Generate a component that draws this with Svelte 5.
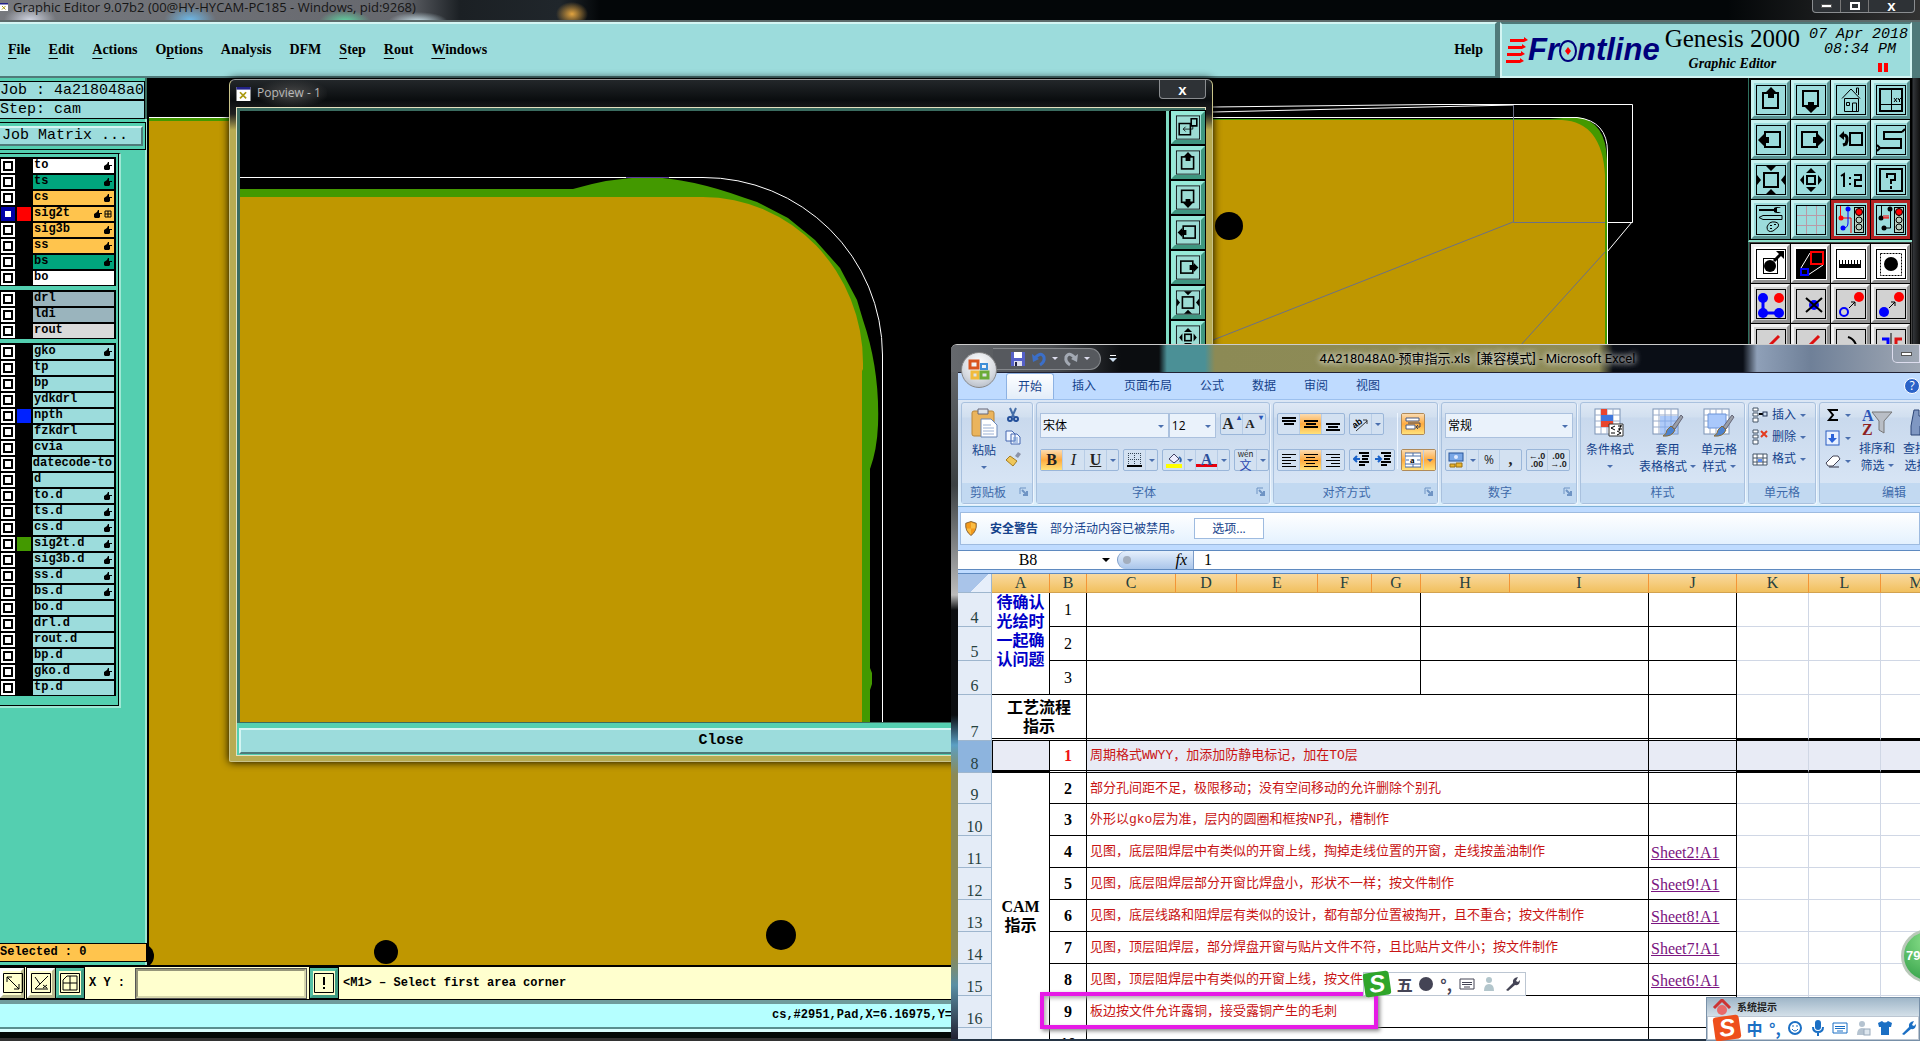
<script lang="ts">
  type Layer = { name: string; bg?: string; swatch?: string; hand?: boolean; grid?: boolean; active?: boolean };

  const menus = [
    ["", "F", "ile"],
    ["", "E", "dit"],
    ["", "A", "ctions"],
    ["O", "p", "tions"],
    ["Analysis", "", ""],
    ["DFM", "", ""],
    ["", "S", "tep"],
    ["", "R", "out"],
    ["", "W", "indows"],
  ];

  const layerGroups: Layer[][] = [
    [
      { name: "to", bg: "#fff", hand: true },
      { name: "ts", bg: "#00a57d", hand: true },
      { name: "cs", bg: "#ffc44d", hand: true },
      { name: "sig2t", bg: "#ffc44d", hand: true, grid: true, swatch: "#f00", active: true },
      { name: "sig3b", bg: "#ffc44d", hand: true },
      { name: "ss", bg: "#ffc44d", hand: true },
      { name: "bs", bg: "#00a57d", hand: true },
      { name: "bo", bg: "#fff" },
    ],
    [
      { name: "drl", bg: "#9ab4bd" },
      { name: "ldi", bg: "#9ab4bd" },
      { name: "rout", bg: "#dadada" },
    ],
    [
      { name: "gko", hand: true },
      { name: "tp" },
      { name: "bp" },
      { name: "ydkdrl" },
      { name: "npth", swatch: "#0022ff" },
      { name: "fzkdrl" },
      { name: "cvia" },
      { name: "datecode-to" },
      { name: "d" },
      { name: "to.d", hand: true },
      { name: "ts.d", hand: true },
      { name: "cs.d", hand: true },
      { name: "sig2t.d", hand: true, swatch: "#439900" },
      { name: "sig3b.d", hand: true },
      { name: "ss.d", hand: true },
      { name: "bs.d", hand: true },
      { name: "bo.d" },
      { name: "drl.d" },
      { name: "rout.d" },
      { name: "bp.d" },
      { name: "gko.d", hand: true },
      { name: "tp.d" },
    ],
  ];

  // all tool glyphs share a 30x30 box
  const frame = '<rect x=".5" y=".5" width="29" height="29" fill="none" stroke="#000"/>';
  const sq = (x: number, y: number, s: number) =>
    `<rect x="${x}" y="${y}" width="${s}" height="${s}" fill="none" stroke="#000" stroke-width="2"/>`;
  const up = '<path d="M15 2l6 6h-3v5h-6v-5h-3z"/>';
  const lights = (c: string) =>
    `<rect x="18.500" y="2.500" width="9" height="25" fill="#b9cfc0" stroke="#000"/><circle cx="23" cy="7" r="3.500" fill="${c}" stroke="#000"/><circle cx="23" cy="15" r="3" fill="none" stroke="#000"/><circle cx="23" cy="22" r="3" fill="none" stroke="#000"/>`;

  const icons: Record<string, string> = {
    up: frame + sq(7, 8, 15) + up,
    down: frame + sq(7, 6, 15) + '<path d="M15 28l6-6h-3v-5h-6v5h-3z"/>',
    left: frame + sq(9, 7, 15) + '<path d="M2 15l6-6v3h5v6h-5v3z"/>',
    right: frame + sq(6, 7, 15) + '<path d="M28 15l-6-6v3h-5v6h5v3z"/>',
    home: frame + '<path d="M6 13.500L15 4l9 9.500M8.500 13.500v13h14v-13zM16.500 27v-9h4v9M10.500 17.500h3v3h-3zM20.500 8V3h2v7" fill="none" stroke="#000"/>',
    xy: frame + '<path d="M4 4h22v22H4z" fill="none" stroke="#000" stroke-width="2"/><path d="M4 19.500h22M15.500 4v22" stroke="#000"/><path d="M18 13l3 4M21 13l-3 4M22 13l1 2 2-2M23.500 15v2" fill="none" stroke="#000"/>',
    back: frame + sq(14, 8, 12) + '<path d="M8 10q5 1 2 9l-3 1" fill="none" stroke="#000" stroke-width="3"/><path d="M3 11l5-5v9z"/>',
    snake: frame + '<path d="M26 7H8v7h17v9H4M26 7l3-3M4 23l-3-3M4 23l-3 3" fill="none" stroke="#000" stroke-width="2"/>',
    zoomin: frame + sq(8, 8, 14) + '<path d="M10 1h10l-5 5zM10 29h10l-5-5zM1 10v10l4-5zM29 10v10l-4-5z"/>',
    zoomout: frame + sq(11, 11, 8) + '<path d="M10 8h10l-5-5zM10 22h10l-5 5zM8 10v10l-4-5zM22 10v10l4-5z"/>',
    ratio: frame + '<path d="M5 11l3-2v13M14 12v2M14 18v2M18 10h7v5h-6v6h7" fill="none" stroke="#000" stroke-width="2"/>',
    help: frame + sq(4, 4, 22) + '<path d="M11 13V9h8v6h-4v4M15 21v3" fill="none" stroke="#000" stroke-width="2"/>',
    setup: frame + '<path d="M3 4h15v-1q3-2 7 0h-4v4h4q-4 2-7 0V6H3z"/><path d="M3 12.500l4-2h19v4H7zM11 22q2-6 8-5 5 1 3 5l-5 4q-6 2-6-4z" fill="none" stroke="#000"/><path d="M14 20h2v1h-2zM18 19h2v1h-2zM14 24h2v-1h-2z"/>',
    mesh: frame + '<path d="M10.500 1v28M20.500 1v28M1 10.500h28M1 20.500h28" stroke="#b99aa6" fill="none"/>',
    netA: frame + lights("#f00") + '<path d="M4.500 1v12H15v15" fill="none" stroke="#f00"/><path d="M12 4v14q0 5-5 5" fill="none" stroke="#00f"/><circle cx="5" cy="13" r="2.500" fill="#f00"/><circle cx="12" cy="4" r="2.500" fill="#00f"/><circle cx="7" cy="23" r="2.500" fill="#00f"/>',
    netB: frame + lights("#f00") + '<path d="M5.500 1v12M14.500 4v19H8" fill="none" stroke="#000"/><circle cx="5" cy="13" r="2.500"/><circle cx="14" cy="4" r="2.500"/><circle cx="8" cy="23" r="2.500"/><path d="M7 13h6M8 10v3M10 10v3M12 10v3" stroke="#f00"/>',
    dotArrow: frame + '<rect x="7.500" y="9.500" width="14" height="15" fill="none" stroke="#000"/><circle cx="14" cy="17" r="6"/><path d="M18 12l8-8" stroke="#000" stroke-width="3"/><path d="M20 2h8v8z"/>',
    zoomBox: '<rect width="30" height="30"/><path d="M5 19L14 4M12 26L27 16" stroke="#fff"/><rect x="15" y="3" width="12" height="12" fill="none" stroke="#f00" stroke-width="2"/><rect x="5" y="20" width="7" height="6" fill="none" stroke="#00f" stroke-width="2"/>',
    ruler: frame + '<path d="M3 11h1v4h2v-4h1v4h2v-4h1v4h2v-4h1v4h2v-4h1v4h2v-4h1v4h2v-4h1v4h2v-4h1v8H3z"/>',
    dotSel: frame + '<rect x="4.500" y="4.500" width="21" height="22" fill="none" stroke="#000" stroke-dasharray="2 1"/><circle cx="15" cy="15" r="7"/>',
    links: frame + '<path d="M7 9v15h16" fill="none" stroke="#00f" stroke-width="3"/><g fill="#00f"><circle cx="7" cy="9" r="5"/><circle cx="7" cy="24" r="5"/><circle cx="23" cy="24" r="5"/></g><circle cx="23" cy="9" r="5" fill="#f00"/>',
    cross: frame + '<circle cx="18" cy="16" r="5" fill="#00f"/><path d="M10 9l16 14M26 9L10 23" stroke="#000" stroke-width="2"/>',
    moveA: frame + '<circle cx="8" cy="23" r="4" fill="none" stroke="#00f" stroke-width="2"/><path d="M13 19l6-6M15 13h4v4" fill="none" stroke="#000"/><circle cx="23" cy="8" r="5" fill="#f00"/>',
    moveB: frame + '<circle cx="8" cy="23" r="5" fill="#00f"/><path d="M13 19l6-6M15 13h4v4" fill="none" stroke="#000"/><circle cx="23" cy="8" r="5" fill="#f00"/>',
    lineA: frame + '<path d="M23 7L8 22" stroke="#d11" stroke-width="3"/><path d="M8 24h12" stroke="#00f" stroke-width="3"/>',
    arc: frame + '<path d="M12 8q10 3 9 18" fill="none" stroke="#000" stroke-width="2"/>',
    mirror: frame + '<path d="M15 4v24" stroke="#000"/><path d="M6 10h6v16" fill="none" stroke="#00f" stroke-width="3"/><path d="M26 10h-6v16" fill="none" stroke="#d11" stroke-width="3"/>',
    clone: frame + '<path d="M4 10h14v14H4zM19 4h7v9h-7z" fill="none" stroke="#000" stroke-width="2"/><path d="M9 17h12v-5M12 14l-3 3 3 3" fill="none" stroke="#000"/>',
  };

  const viewTools = ["up", "down", "home", "xy", "left", "right", "back", "snake", "zoomin", "zoomout", "ratio", "help", "setup", "mesh", "netA", "netB"];
  const editTools = ["dotArrow", "zoomBox", "ruler", "dotSel", "links", "cross", "moveA", "moveB", "lineA", "lineA", "arc", "mirror"];
  const popTools = ["clone", "up", "down", "left", "right", "zoomin", "zoomout"];

  const lines = (ws: number[], y: number, x = 0) =>
    ws.map((w, i) => `<path d="M${x + (16 - w) / 2} ${y + i * 3}h${w}" stroke="#000" stroke-width="2"/>`).join("");
  const thinLines = (at: (w: number) => number) =>
    [14, 9, 14, 9, 14].map((w, i) => `<path d="M${at(w)} ${2.5 + i * 3}h${w}" stroke="#000"/>`).join("");
  const indent = '<path d="M6 1h10M9 4h7M9 7h6M6 10h10M6 13h6" stroke="#000" stroke-width="2"/>';

  const xl: Record<string, string> = {
    top: lines([14, 14, 10], 2),
    middle: lines([14, 10, 14], 5),
    bottom: lines([14, 10, 14], 8),
    alignL: thinLines(() => 1),
    alignC: thinLines((w) => Math.floor((16 - w) / 2)),
    alignR: thinLines((w) => 15 - w),
    outdent: indent + '<path d="M7 7H1M4 4L1 7l3 3" stroke="#1a62c8" fill="none" stroke-width="2"/>',
    indent: indent + '<path d="M0 7h6M3 4l3 3-3 3" stroke="#1a62c8" fill="none" stroke-width="2"/>',
    orient: '<path d="M3 15L14 5M10 4h4v4" stroke="#333" fill="none"/><text x="0" y="10" font-size="9" font-weight="bold" transform="rotate(-35 5 9)" font-family="Liberation Sans">ab</text>',
    wrap: '<path d="M1 2h13v3H1zM1 9h9v4H1z" fill="#fff" stroke="#4a5a80"/><path d="M3 7h12v4h-3M13 9l-2 2 2 2" fill="none" stroke="#445"/>',
    merge: '<rect x="0" y="1" width="16" height="14" fill="#fff" stroke="#4a6ea8"/><path d="M0 4h16M0 12h16M8 1v3M8 12v3M1 8h3M12 8h3" stroke="#4a6ea8"/><text x="5" y="11" font-size="9" font-weight="bold" font-family="Liberation Serif">a</text>',
    borders: '<path d="M1 1.500h13M1 7.500h13M1.500 1v12M7.500 1v12M13.500 1v12" stroke="#345" stroke-dasharray="1 1"/><path d="M0 14h15" stroke="#000" stroke-width="2"/>',
    fill: '<path d="M3 7l5-5 5 5-5 4z" fill="#eef" stroke="#446"/><path d="M13 5q3 2 1 5" fill="none" stroke="#36a" stroke-width="2"/><path d="M0 14h16" stroke="#ff0" stroke-width="4"/>',
    money: '<rect x="1" y="1" width="14" height="8" fill="#7aa7e6" stroke="#27549a"/><circle cx="8" cy="5" r="2" fill="#dfeaff"/><path d="M8 11h6v4H8zM2 12h5v3H2z" fill="#e9b52c" stroke="#9a7010"/>',
    cut: '<path d="M5 1l4 9M11 1L7 10" stroke="#456ea8" stroke-width="2"/><circle cx="5" cy="12" r="2" fill="none" stroke="#234f9a" stroke-width="2"/><circle cx="11" cy="12" r="2" fill="none" stroke="#234f9a" stroke-width="2"/>',
    copy: '<path d="M1 2h6l3 3v7H1zM6 5h6l3 3v7H6z" fill="#f2f7ff" stroke="#4467b0"/><path d="M8 9h5M8 11h5M8 13h5" stroke="#6d94d0"/>',
    brush: '<path d="M10 5l3-4 3 2-3 4z" fill="#8b93a8"/><path d="M5 5l7 5-4 5-7-6z" fill="#efc75a" stroke="#a67c20"/>',
    sigma: '<path d="M13 3H4l4 5-4 5h9" fill="none" stroke="#000" stroke-width="2"/>',
    filldown: '<rect x="1" y="1" width="13" height="14" fill="#e7f0ff" stroke="#2b5cc0"/><path d="M6 4v4H3l4 5 5-5H9V4z" fill="#2b62d9"/>',
    eraser: '<path d="M1 10l7-7h5l2 3-7 7H3z" fill="#fff" stroke="#445"/><path d="M4 14h10" stroke="#334"/>',
    insert: '<path d="M1 1h5v3H1zM1 6h5v3H1zM1 11h5v4H1z" fill="#fff" stroke="#456"/><path d="M7 7h4" stroke="#000" stroke-width="2"/><rect x="11" y="5" width="4" height="4" fill="#cde" stroke="#235"/>',
    remove: '<path d="M1 1h5v3H1zM1 6h5v3H1zM1 11h5v4H1z" fill="#fff" stroke="#456"/><path d="M9 2l6 6M15 2L9 8" stroke="#e33b1f" stroke-width="2"/>',
    format: '<path d="M1 3h14v11H1zM1 7h14M1 11h14M5 3v11M11 3v11" fill="#fff" stroke="#456"/><rect x="6" y="8" width="4" height="3" fill="#5b8cf0"/>',
  };

  const gridBase = '<rect x="1" y="1" width="25" height="25" fill="#fff" stroke="#7c93b5"/><path d="M1 7h25M1 13h25M1 19h25M7 1v25M13 1v25M19 1v25" stroke="#9aaccb"/>';
  const paint = '<path d="M29 7l-9 12 3 2 8-12z" fill="#9a9fa8" stroke="#667"/><path d="M19 18l4 4q-3 7-12 6 4-2 4-6z" fill="#4c82cf" stroke="#8a6a30"/>';
  const styleButtons = [
    { top: "条件格式", sub: "", art: gridBase + '<path d="M7 1h6v6H7zM7 13h12v6H7z" fill="#e9452d"/><path d="M7 7h12v6H7z" fill="#3f77dd"/><path d="M15 16h14v12H15z" fill="#fff" stroke="#333"/><path d="M21 18l-4 2 4 2M17 25h4M24 18h4M24 21h4M27 17l-2 6M23 23l4 2-4 2" fill="none" stroke="#000"/>' },
    { top: "套用", sub: "表格格式", art: gridBase + '<path d="M8 8h18v18H8z" fill="#7aa9f4" opacity=".6"/>' + paint },
    { top: "单元格", sub: "样式", art: gridBase + '<path d="M5 6h18v14H5z" fill="#a9c8fb" stroke="#6c94d8"/>' + paint },
  ];

  const cols = [
    ["A", 58], ["B", 37], ["C", 89], ["D", 61], ["E", 81], ["F", 54], ["G", 49],
    ["H", 89], ["I", 139], ["J", 88], ["K", 72], ["L", 72], ["M", 72],
  ] as [string, number][];

  const notes = [
    { row: 9, text: "部分孔间距不足，极限移动；没有空间移动的允许删除个别孔" },
    { row: 10, text: "外形以gko层为准，层内的圆圈和框按NP孔，槽制作" },
    { row: 11, text: "见图，底层阻焊层中有类似的开窗上线，掏掉走线位置的开窗，走线按盖油制作", link: "Sheet2!A1" },
    { row: 12, text: "见图，底层阻焊层部分开窗比焊盘小，形状不一样；按文件制作", link: "Sheet9!A1" },
    { row: 13, text: "见图，底层线路和阻焊层有类似的设计，都有部分位置被掏开，且不重合；按文件制作", link: "Sheet8!A1" },
    { row: 14, text: "见图，顶层阻焊层，部分焊盘开窗与贴片文件不符，且比贴片文件小；按文件制作", link: "Sheet7!A1" },
    { row: 15, text: "见图，顶层阻焊层中有类似的开窗上线，按文件", link: "Sheet6!A1" },
    { row: 16, text: "板边按文件允许露铜，接受露铜产生的毛刺" },
    { row: 17, text: "" },
  ];
</script>

{#snippet tool(name: string)}
  <button class="tool {name}" aria-label={name}><svg viewBox="0 0 30 30">{@html icons[name]}</svg></button>
{/snippet}

{#snippet ico(name: string)}
  <svg class="ico" viewBox="0 0 16 16">{@html xl[name]}</svg>
{/snippet}

{#snippet caret()}<i class="caret"></i>{/snippet}

{#snippet launcher()}
  <svg class="launch" viewBox="0 0 9 9"><path d="M1 7V1h6" fill="none" stroke="#6f94c4" /><path d="M3 3l4 4M8 4v4H4" fill="none" stroke="#6f94c4" stroke-width="2" /></svg>
{/snippet}

{#snippet blanks()}
  <td></td><td></td><td></td>
{/snippet}

<div class="desktop">
  <header class="apptitle">
    <svg class="xicon" viewBox="0 0 16 16"><rect width="16" height="16" fill="#fff" /><path d="M0 0h16v3H0z" fill="#228" /><path d="M4 6l7 7M11 6l-7 7" stroke="#aa9a10" stroke-width="2" /></svg>
    <span>Graphic Editor 9.07b2 (00@HY-HYCAM-PC185 - Windows, pid:9268)</span>
    <div class="winbtns">
      <button aria-label="Minimize"><i class="min"></i></button>
      <button aria-label="Maximize"><i class="max"></i></button>
      <button class="wide">x</button>
    </div>
  </header>

  <div class="topbar">
    <nav class="menubar">
      {#each menus as [pre, key, rest]}
        <button>{pre}{#if key}<u>{key}</u>{/if}{rest}</button>
      {/each}
      <button class="help-menu">Help</button>
    </nav>
    <div class="brand">
      <div class="frontline">
        <svg class="speed" viewBox="0 0 22 26"><path d="M4 2h14v-2l4 3-4 2H4zM2 9h14V7l4 3-4 2H2zM1 16h14v-2l4 3-4 2H1zM0 23h14v-2l4 3-4 2H0z" fill="#f00" /></svg>
        <span>Fr</span>
        <svg class="ring" viewBox="0 0 18 24"><ellipse cx="9" cy="13" rx="8" ry="10" fill="none" stroke="#00007b" stroke-width="2" /><path d="M9 9l3 4-3 4-3-4z" fill="#f00" /></svg>
        <span>ntline</span>
      </div>
      <div class="product"><b>Genesis 2000</b><em>Graphic Editor</em></div>
      <div class="clock">
        <span>07 Apr 2018</span><span>08:34 PM</span>
        <i class="pause"></i>
      </div>
    </div>
  </div>

  <main class="work">
    <aside class="side">
      <div class="jobinfo">
        <div>Job : 4a218048a0</div>
        <div>Step: cam</div>
      </div>
      <div class="matrix"><button>Job Matrix ...</button></div>
      <div class="layers">
        {#each layerGroups as group}
          <ul>
            {#each group as l}
              <li>
                <input type="checkbox" class:active={l.active} aria-label={l.name} />
                <i class="swatch" style:background={l.swatch ?? "#000"}></i>
                <span class="lname" style:background={l.bg ?? "#9cdcdc"}>
                  {l.name}
                  <span class="marks">
                    {#if l.hand}<svg viewBox="0 0 8 8"><path d="M0 4l3-2 1-2h1v3h3v1H6v3l-1 1H1L0 7z" /></svg>{/if}
                    {#if l.grid}<svg viewBox="0 0 8 8"><path d="M1 1h6v6H1zM1 4h6M4 1v6" fill="none" stroke="#000" /></svg>{/if}
                  </span>
                </span>
              </li>
            {/each}
          </ul>
        {/each}
      </div>
      <div class="selected">Selected : 0</div>
    </aside>

    <!-- drawn in screen units, shifted to the pane's origin -->
    <svg class="board">
      <g transform="translate(-149 -78)">
        <path d="M149 118H1213V119H1550L1577 117Q1606 121 1607 160V1966H149z" fill="#439900" />
        <path d="M149 121H1213V120H1562Q1602 122 1605 175V1966H149z" fill="#bf9700" />
        <path d="M149 117.500H1577Q1607.500 121 1607.500 152V1966M1213 112L1513 105M1213 107L1434 104.500H1632.500V222.500H1607M1632 222L1607 252" fill="none" stroke="#fff" />
        <path d="M1513.500 105V222.500H1605M1513 222L1213 340M1605 252L1520 346" fill="none" stroke="#6b7086" />
        <circle cx="1229" cy="226" r="14" />
        <circle cx="386" cy="952" r="12" />
        <circle cx="781" cy="935" r="15" />
        <circle cx="142" cy="956" r="12" />
      </g>
    </svg>

    <div class="toolbox">
      <div class="tools">{#each viewTools as t}{@render tool(t)}{/each}</div>
      <div class="tools grey">{#each editTools as t}{@render tool(t)}{/each}</div>
    </div>
  </main>

  <footer>
    <div class="command">
      <button class="cbtn" aria-label="Diagonal"><svg viewBox="0 0 20 20"><path d="M.5 .5h19v19H.5zM4 4l12 12M4 9V4h5M16 11v5h-5" fill="none" stroke="#000" /></svg></button>
      <button class="cbtn" aria-label="Angle"><svg viewBox="0 0 20 20"><path d="M.5 .5h19v19H.5zM17 3L4 16h13M4 4l5 7" fill="none" stroke="#000" /><path d="M12 12l4 3M16 12l-4 3" stroke="#000" /></svg></button>
      <button class="cbtn on" aria-label="Snap"><svg viewBox="0 0 20 20"><path d="M.5 .5h19v19H.5zM3 7l4-4h10v14H3zM3 10h14M10 3v14" fill="none" stroke="#000" /></svg></button>
      <label for="xy">X Y :</label>
      <input id="xy" type="text" />
      <button class="cbtn on" aria-label="Enter"><svg viewBox="0 0 20 20"><path d="M.5 .5h19v19H.5z" fill="none" stroke="#000" /><path d="M10 4v8M10 14v2" stroke="#000" stroke-width="2" /></svg></button>
      <span class="hint">&lt;M1&gt; – Select first area corner</span>
    </div>
    <div class="status"><span>cs,#2951,Pad,X=6.16975,Y=</span></div>
    <div class="edge"></div>
  </footer>

  <section class="popview">
    <header>
      <svg class="xicon" viewBox="0 0 16 16"><rect width="16" height="16" fill="#fff" /><path d="M0 0h16v3H0z" fill="#228" /><path d="M4 6l7 7M11 6l-7 7" stroke="#aa9a10" stroke-width="2" /></svg>
      <span>Popview - 1</span>
      <div class="winbtns"><button class="wide">x</button></div>
    </header>
    <div class="popbody">
      <div class="popmain">
        <svg class="popcanvas">
          <g transform="translate(-240 -111)">
            <path d="M240 177.500H703A179 178 0 0 1 882.500 355V930" fill="none" stroke="#fff" />
            <path d="M240 189H573Q610 178 647 177Q690 178 745 198L757 202 788 218 815 240 840 268 857 300 863 320Q880 370 878 425Q877 450 870 469V668L872 673V684L870 690V930H240z" fill="#439900" />
            <path d="M240 197H703A160 166 0 0 1 863 363V369L862 371V930H240z" fill="#bf9700" />
            <path d="M626 177.500h43" stroke="#5a3a9a" />
          </g>
        </svg>
        <div class="poptools">{#each popTools as t}{@render tool(t)}{/each}</div>
      </div>
      <div class="popfoot"><button>Close</button></div>
    </div>
  </section>

  <section class="excel">
    <header class="xtitle">
      <div class="qat">
        <svg class="ico" viewBox="0 0 16 16"><path d="M1 1h14v14H1z" fill="#5560c8" /><path d="M4 1h8v6H4z" fill="#fff" /><path d="M4 10h8v5H4z" fill="#dde" /><path d="M5 11h2v4H5z" fill="#224" /></svg>
        <svg class="ico" viewBox="0 0 16 16"><path d="M4 7q6-7 9-1 1 5-4 8" fill="none" stroke="#3b6fc9" stroke-width="3" /><path d="M1 3l1 8 6-3z" fill="#3b6fc9" /></svg>
        {@render caret()}
        <svg class="ico" viewBox="0 0 16 16"><path d="M12 7Q6 0 3 6q-1 5 4 8" fill="none" stroke="#a3a9b3" stroke-width="3" /><path d="M15 3l-1 8-6-3z" fill="#a3a9b3" /></svg>
        {@render caret()}
      </div>
      <svg class="more" viewBox="0 0 8 8"><path d="M1 .5h6" stroke="#fff" /><path d="M0 3h8L4 7z" fill="#cde" /></svg>
      <h1>4A218048A0-预审指示.xls&nbsp; [兼容模式] - Microsoft Excel</h1>
      <button class="xmin" aria-label="Minimize"><i class="min"></i></button>
    </header>
    <button class="orb" aria-label="Office">
      <svg viewBox="0 0 24 24"><g fill="none" stroke-width="3"><path d="M3 3h8v7H3z" stroke="#d9541e" /><path d="M14 6h6v5h-6z" stroke="#3f8fd8" stroke-width="2" /><path d="M5 14h6v6H5z" stroke="#f1bb3b" /><path d="M14 14h7v6h-7z" stroke="#6bab36" /></g></svg>
    </button>

    <div class="xbody">
      <nav class="tabs">
        {#each ["开始", "插入", "页面布局", "公式", "数据", "审阅", "视图"] as t, i}
          <button class:on={i === 0}>{t}</button>
        {/each}
        <button class="xhelp">?</button>
      </nav>

      <div class="ribbon">
        <div class="group clip">
          <div class="area row">
            <button class="big">
              <svg viewBox="0 0 28 32"><rect x="2" y="4" width="22" height="25" rx="2" fill="#eab45c" stroke="#b8863a" /><path d="M8 2h10v5H8z" fill="#dde3ea" stroke="#667" /><path d="M11 12h10l6 6v12H11z" fill="#fff" stroke="#6b87b8" /><path d="M13 18h8M13 21h11M13 24h11M13 27h11" stroke="#9ab0d4" /></svg>
              <span>粘贴</span>{@render caret()}
            </button>
            <div class="stack">{@render ico("cut")}{@render ico("copy")}{@render ico("brush")}</div>
          </div>
          <div class="cap">剪贴板{@render launcher()}</div>
        </div>

        <div class="group font">
          <div class="area">
            <div class="line">
              <span class="combo c1"><select aria-label="字体"><option>宋体</option></select></span>
              <span class="combo c2"><select aria-label="字号"><option>12</option></select></span>
              <span class="set"><button class="ga">A<sup>▴</sup></button><button class="gb">A<sup>▾</sup></button></span>
            </div>
            <div class="line">
              <span class="set"><button class="hot serif"><b>B</b></button><button class="serif"><i>I</i></button><button class="serif"><u><b>U</b></u></button><button class="thin" aria-label="更多">{@render caret()}</button></span>
              <span class="set"><button aria-label="边框">{@render ico("borders")}</button><button class="thin" aria-label="更多">{@render caret()}</button></span>
              <span class="set"><button aria-label="填充">{@render ico("fill")}</button><button class="thin" aria-label="更多">{@render caret()}</button><button class="serif fcolor"><b>A</b></button><button class="thin" aria-label="更多">{@render caret()}</button></span>
              <span class="set"><button class="wen"><small>wén</small>文</button><button class="thin" aria-label="更多">{@render caret()}</button></span>
            </div>
          </div>
          <div class="cap">字体{@render launcher()}</div>
        </div>

        <div class="group align">
          <div class="area row">
            <div class="col">
              <div class="line">
                <span class="set"><button aria-label="顶端">{@render ico("top")}</button><button class="hot" aria-label="居中">{@render ico("middle")}</button><button aria-label="底端">{@render ico("bottom")}</button></span>
                <span class="set"><button aria-label="方向">{@render ico("orient")}</button><button class="thin" aria-label="更多">{@render caret()}</button></span>
              </div>
              <div class="line">
                <span class="set"><button aria-label="左对齐">{@render ico("alignL")}</button><button class="hot" aria-label="居中">{@render ico("alignC")}</button><button aria-label="右对齐">{@render ico("alignR")}</button></span>
                <span class="set"><button aria-label="减少缩进">{@render ico("outdent")}</button><button aria-label="增加缩进">{@render ico("indent")}</button></span>
              </div>
            </div>
            <div class="col rule">
              <div class="line"><span class="set hotset"><button class="hot" aria-label="自动换行">{@render ico("wrap")}</button></span></div>
              <div class="line"><span class="set hotset"><button class="hot" aria-label="合并">{@render ico("merge")}</button><button class="thin hot" aria-label="更多">{@render caret()}</button></span></div>
            </div>
          </div>
          <div class="cap">对齐方式{@render launcher()}</div>
        </div>

        <div class="group number">
          <div class="area">
            <div class="line"><span class="combo c3"><select aria-label="数字格式"><option>常规</option></select></span></div>
            <div class="line">
              <span class="set"><button aria-label="会计">{@render ico("money")}</button><button class="thin" aria-label="更多">{@render caret()}</button><button>%</button><button class="serif"><b>,</b></button></span>
              <span class="set dec"><button><span>←.0</span><span>.00</span></button><button><span>.00</span><span>→.0</span></button></span>
            </div>
          </div>
          <div class="cap">数字{@render launcher()}</div>
        </div>

        <div class="group styles">
          <div class="area row">
            {#each styleButtons as s}
              <button class="big"><svg viewBox="0 0 32 30">{@html s.art}</svg><span>{s.top}</span><span>{s.sub}{@render caret()}</span></button>
            {/each}
          </div>
          <div class="cap">样式</div>
        </div>

        <div class="group cells">
          <div class="area list">
            <button>{@render ico("insert")}插入{@render caret()}</button>
            <button>{@render ico("remove")}删除{@render caret()}</button>
            <button>{@render ico("format")}格式{@render caret()}</button>
          </div>
          <div class="cap">单元格</div>
        </div>

        <div class="group edit">
          <div class="area row">
            <div class="list">
              <button aria-label="求和">{@render ico("sigma")}{@render caret()}</button>
              <button aria-label="填充">{@render ico("filldown")}{@render caret()}</button>
              <button aria-label="清除">{@render ico("eraser")}{@render caret()}</button>
            </div>
            <button class="big"><svg viewBox="0 0 32 30"><text x="1" y="14" font-size="16" font-weight="bold" fill="#2b56b8" font-family="Liberation Serif">A</text><text x="1" y="28" font-size="16" font-weight="bold" fill="#8e1f22" font-family="Liberation Serif">Z</text><path d="M11 5h20l-8 9v12l-5-3v-9z" fill="#b9bec6" stroke="#777" /></svg><span>排序和</span><span>筛选{@render caret()}</span></button>
            <button class="big"><svg viewBox="0 0 32 30"><path d="M9 3h5v6h3V3h5v6h3l4 11v8h-9v-9h-5v9H6v-9z" fill="#7f97c2" stroke="#2c4576" /></svg><span>查找和</span><span>选择{@render caret()}</span></button>
          </div>
          <div class="cap">编辑</div>
        </div>
      </div>

      <div class="message">
        <svg viewBox="0 0 16 18"><path d="M8 1l6 2q1 9-6 14Q1 12 2 3z" fill="#f39a1c" stroke="#7a5a30" /><path d="M8 2v14Q3 11 3 9h10V4z" fill="#ffd45e" opacity=".6" /></svg>
        <b>安全警告</b>
        <span>部分活动内容已被禁用。</span>
        <button>选项...</button>
      </div>

      <div class="formula">
        <div class="namebox"><span>B8</span><i class="drop"></i></div>
        <div class="fx"><i class="ball"></i><em>fx</em></div>
        <input type="text" value="1" aria-label="编辑栏" />
      </div>

      <div class="sheet">
        <table>
          <colgroup>
            <col style:width="34px" />
            {#each cols as [, w]}<col style:width="{w}px" />{/each}
          </colgroup>
          <thead>
            <tr><th class="corner"></th>{#each cols as [c]}<th>{c}</th>{/each}</tr>
          </thead>
          <tbody>
            {#each [4, 5, 6] as r}
              <tr class="tall">
                <th>{r}</th>
                {#if r === 4}<td class="k blue" rowspan="3">待确认光绘时一起确认问题</td>{/if}
                <td class="k num">{r - 3}</td>
                <td class="k" colspan="5"></td>
                <td class="k" colspan="2"></td>
                <td class="k"></td>
                {@render blanks()}
              </tr>
            {/each}
            <tr class="seven">
              <th>7</th>
              <td class="k heading" colspan="2">工艺流程<br />指示</td>
              <td class="k" colspan="7"></td>
              <td class="k"></td>
              {@render blanks()}
            </tr>
            <tr class="current">
              <th>8</th>
              <td class="k handle"></td>
              <td class="k num bold red">1</td>
              <td class="k note" colspan="7">周期格式WWYY，加添加防静电标记，加在TO层</td>
              <td class="k"></td>
              {@render blanks()}
            </tr>
            {#each notes as n, i}
              <tr class:nine={i === 0}>
                <th>{n.row}</th>
                {#if i === 0}<td class="k heading" rowspan="9">CAM<br />指示</td>{/if}
                <td class="k num bold">{n.row - 7}</td>
                <td class="k note" colspan="7">{n.text}</td>
                <td class="k link">{#if n.link}<a href="#{n.link}">{n.link}</a>{/if}</td>
                {@render blanks()}
              </tr>
            {/each}
          </tbody>
        </table>
      </div>
    </div>
  </section>

  <div class="marker"></div>

  <div class="ime small">
    <span class="slogo green">S</span>
    <b>五</b>
    <i class="moon"></i>
    <b>°,</b>
    <svg viewBox="0 0 16 16"><path d="M1 3h14v10H1zM3 6.500h10M3 8.500h10M5 11h6" fill="none" stroke="#445" /></svg>
    <svg viewBox="0 0 16 16"><circle cx="8" cy="4" r="3" fill="#b3c6cc" /><path d="M3 15q0-7 5-7t5 7z" fill="#b3c6cc" /></svg>
    <svg viewBox="0 0 16 16"><path d="M2 14L9 7q-1-5 5-6l-2 4 2 1 2-2q0 6-5 5l-7 6z" fill="#445" /></svg>
  </div>

  <div class="ball360">79</div>

  <div class="notice">
    <div class="ntitle">
      <svg viewBox="0 0 20 16"><path d="M2 9l8-8 8 8" fill="none" stroke="#c33" stroke-width="3" /><circle cx="10" cy="11" r="5" fill="#e86a6a" /></svg>
      系统提示
    </div>
    <div class="ime blue">
      <span class="slogo orange">S</span>
      <b>中</b>
      <b>°,</b>
      <svg viewBox="0 0 16 16"><circle cx="8" cy="8" r="6" fill="none" stroke="#1b6fc4" stroke-width="2" /><path d="M5 9q3 4 6 0M6 5v2M10 5v2" fill="none" stroke="#1b6fc4" /></svg>
      <svg viewBox="0 0 16 16"><rect x="5" y="0" width="6" height="10" rx="3" fill="#1b6fc4" /><path d="M3 7q0 5 5 5t5-5M8 12v4" fill="none" stroke="#1b6fc4" stroke-width="2" /></svg>
      <svg viewBox="0 0 16 16"><path d="M1 3h14v10H1zM3 6.500h10M3 8.500h10M5 11h6" fill="none" stroke="#1b6fc4" /></svg>
      <svg viewBox="0 0 16 16"><circle cx="7" cy="4" r="3" fill="#b5c3d0" /><path d="M2 15q0-7 5-7t5 7z" fill="#b5c3d0" /><rect x="9" y="9" width="6" height="6" fill="#dde6ee" stroke="#9ab" /></svg>
      <svg viewBox="0 0 16 16"><path d="M1 3l4-2q3 3 6 0l4 2-1 4h-2v8H4V7H2z" fill="#1b6fc4" /></svg>
      <svg viewBox="0 0 16 16"><path d="M2 14L9 7q-1-5 5-6l-2 4 2 1 2-2q0 6-5 5l-7 6z" fill="#1b6fc4" /></svg>
    </div>
  </div>
</div>

<style>
  :global(body) {
    margin: 0;
    overflow: hidden;
    background: #000;
  }
  .desktop {
    --aqua: #9cdcdc;
    --teal: #54cfb0;
    --shade: #4f7a7a;
    --song: "Liberation Serif", "Noto Sans CJK SC", serif;
    --ui: "Open Sans", "Noto Sans CJK SC", sans-serif;
    position: relative;
    display: flex;
    flex-direction: column;
    height: 100vh;
    overflow: hidden;
    background: #000;
    color: #000;
  }
  .desktop *,
  .desktop *::before,
  .desktop *::after {
    box-sizing: border-box;
  }
  button,
  input,
  select {
    margin: 0;
    padding: 0;
    border: 0;
    background: none;
    font: inherit;
    color: inherit;
    border-radius: 0;
  }
  h1 {
    margin: 0;
  }
  ul {
    list-style: none;
    margin: 0;
    padding: 0;
  }

  /* editor window */
  .apptitle {
    display: flex;
    flex: none;
    gap: 5px;
    height: 22px;
    padding-right: 5px;
    border-bottom: 2px solid #5d6b6b;
    background:
      radial-gradient(ellipse 26px 14px at 30px 20px, #cfd3e0, transparent),
      radial-gradient(ellipse 26px 14px at 190px 20px, #6db8e8, transparent),
      radial-gradient(ellipse 26px 12px at 345px 22px, #5fd9a4, transparent),
      radial-gradient(ellipse 30px 10px at 418px 22px, #cfe6ef, transparent),
      radial-gradient(ellipse 16px 12px at 572px 14px, #e2a440, transparent),
      linear-gradient(90deg, #77797e 0, #66686e 400px, #1b2024 460px, #20262b 560px, #030608 600px, #030608 90%, #333 100%);
    font: 13px/14px var(--ui);
  }
  .apptitle span {
    color: #151515;
  }
  .apptitle .xicon {
    width: 8px;
  }
  .xicon {
    height: 14px;
    flex: none;
  }
  .winbtns {
    display: flex;
    margin-left: auto;
    height: 13px;
    border: 1px solid #8a8d90;
    border-top: 0;
    border-radius: 0 0 4px 4px;
    color: #fff;
    background: #2e3236;
  }
  .winbtns button {
    display: grid;
    place-items: center;
    width: 28px;
    border-right: 1px solid #777;
    font: bold 15px/12px "Liberation Sans", sans-serif;
  }
  .winbtns button.wide {
    width: 45px;
    border: 0;
  }
  .min {
    width: 11px;
    height: 4px;
    background: #fff;
    border: 1px solid #555;
  }
  .max {
    width: 10px;
    height: 8px;
    border: 2px solid #fff;
  }
  .topbar {
    display: flex;
    flex: none;
    height: 56px;
    gap: 3px;
    background: #4f7a7a;
    padding-right: 8px;
  }
  .menubar {
    display: flex;
    flex: 1;
    align-items: center;
    gap: 18px;
    padding: 0 12px 0 8px;
    background: var(--aqua);
    border: 2px solid var(--shade);
    border-top-color: #d4f5f3;
    border-left: 0;
    font: bold 14px/18px "Liberation Serif", serif;
  }
  .menubar u {
    text-underline-offset: 4px;
  }
  .help-menu {
    margin-left: auto;
  }
  .brand {
    display: flex;
    gap: 5px;
    width: 412px;
    padding: 0 2px 0 4px;
    background: var(--aqua);
    border: 2px solid #d4f5f3;
    border-top-color: var(--shade);
  }
  .frontline {
    display: flex;
    align-items: center;
    color: #00007b;
    font: italic bold 31px/50px "Liberation Sans", sans-serif;
  }
  .speed {
    width: 22px;
    height: 26px;
  }
  .ring {
    width: 18px;
    height: 24px;
  }
  .product {
    display: flex;
    flex-direction: column;
    align-items: center;
    font: 25px/30px "Liberation Serif", serif;
  }
  .product b {
    font-weight: normal;
    white-space: nowrap;
  }
  .product em {
    font: italic bold 14px/20px "Liberation Serif", serif;
  }
  .clock {
    display: flex;
    flex: 1;
    flex-direction: column;
    align-items: flex-end;
    padding-top: 3px;
    font: italic 15px/15px "Liberation Mono", monospace;
    white-space: nowrap;
  }
  .clock span + span {
    padding-right: 12px;
  }
  .pause {
    width: 10px;
    height: 9px;
    margin: 6px 20px 0 0;
    border: solid #f00;
    border-width: 0 4px;
  }

  .work {
    display: flex;
    flex: 1;
    min-height: 0;
    padding-right: 8px;
    background: linear-gradient(90deg, #000 calc(100% - 8px), #33363a calc(100% - 7px), #111 100%);
  }
  .side {
    display: flex;
    flex-direction: column;
    flex: none;
    width: 149px;
    border-right: 2px solid #000;
    background: var(--teal);
    box-shadow: inset -2px 0 #9ee8d4;
    font: 15px/18px "Liberation Mono", monospace;
    white-space: nowrap;
  }
  .jobinfo {
    padding-top: 3px;
    border-right: 2px solid #3b6b5e;
  }
  .jobinfo div {
    height: 19px;
    border: 1px solid #000;
    border-left: 0;
    background: var(--aqua);
  }
  .matrix {
    padding: 3px 2px 3px 0;
    margin: 3px 1px 3px 0;
    border: 1px solid #000;
    border-left: 0;
  }
  .matrix button {
    width: 100%;
    padding-left: 2px;
    text-align: left;
    background: var(--aqua);
    border: solid var(--shade);
    border-width: 2px 2px 2px 0;
    border-top-color: #d4f5f3;
    line-height: 16px;
  }
  .layers {
    display: flex;
    flex-direction: column;
    gap: 4px;
    width: 121px;
    padding: 3px 3px 10px 0;
    border-top: 1px solid #000;
    border-right: 2px solid #9ee8d4;
    border-bottom: 2px solid #9ee8d4;
    box-shadow: inset -1px -1px #000;
    font: bold 12px/13px "Liberation Mono", monospace;
  }
  .layers ul {
    width: 116px;
    padding-bottom: 1px;
    background: #000;
  }
  .layers li {
    display: flex;
    gap: 2px;
    height: 16px;
    padding: 2px 2px 0 0;
  }
  .layers input {
    appearance: none;
    flex: none;
    width: 10px;
    height: 10px;
    margin: 2px 2px 2px 3px;
    border: 2px solid #000;
    background: #fff;
    box-shadow: 0 0 0 2px #fff;
  }
  .layers input.active {
    border-color: #0000a8;
    box-shadow: 0 0 0 2px #0000a8;
  }
  .swatch {
    width: 14px;
    height: 14px;
  }
  .lname {
    display: flex;
    flex: 1;
    justify-content: space-between;
    height: 14px;
    padding-left: 1px;
  }
  .marks {
    display: flex;
    align-items: center;
    gap: 2px;
    padding-right: 2px;
  }
  .marks svg {
    width: 8px;
    height: 8px;
  }
  .selected {
    margin-top: auto;
    margin-bottom: 3px;
    height: 19px;
    border: 1px solid #000;
    border-left: 0;
    background: #ffc44d;
    font: bold 12px/16px "Liberation Mono", monospace;
  }
  .board {
    flex: 1;
    min-width: 0;
    height: 100%;
    overflow: hidden;
  }
  .toolbox {
    display: flex;
    flex-direction: column;
    flex: none;
  }
  .tools {
    display: grid;
    grid-template-columns: repeat(4, 39px);
    grid-auto-rows: 39px;
    gap: 1px;
    padding: 2px 2px 1px;
    border-left: 1px solid #2e6f5e;
    background: #000;
    border-bottom: 2px solid #8fe0cc;
  }
  .tools.grey {
    background: #444;
  }
  .tool {
    display: grid;
    place-items: center;
    background: var(--aqua);
    border: 3px solid;
    border-color: #c9f3f0 #5c9392 #5c9392 #c9f3f0;
    box-shadow: 0 0 0 1px #000;
  }
  .tool svg {
    width: 30px;
    height: 30px;
  }
  .grey .tool {
    background: #d2d2d2;
    border-color: #f2f2f2 #909090 #909090 #f2f2f2;
  }
  .grey .dotArrow,
  .grey .zoomBox,
  .grey .ruler,
  .grey .dotSel {
    background: #fff;
  }
  .tools .netA,
  .tools .netB {
    border-color: #b52222;
  }

  footer {
    flex: none;
    background: #000;
    font: bold 12px/16px "Liberation Mono", monospace;
  }
  .command {
    display: flex;
    align-items: center;
    gap: 1px;
    height: 33px;
    margin-top: 2px;
    background: #ffffce;
    border-bottom: 1px solid #000;
  }
  .cbtn {
    display: grid;
    place-items: center;
    width: 28px;
    height: 30px;
    border: 3px solid;
    border-color: #fff #b8b890 #b8b890 #fff;
    outline: 1px solid #000;
  }
  .cbtn:first-child {
    width: 24px;
    margin-right: 2px;
  }
  .cbtn.on {
    border-color: #54bfa4 #3f9c84 #3f9c84 #54bfa4;
  }
  .cbtn svg {
    width: 20px;
    height: 20px;
  }
  .command label {
    padding: 0 6px 0 4px;
  }
  .command input {
    width: 170px;
    height: 29px;
    margin: 0 3px 0 4px;
    border: 2px solid;
    border-color: #96967a #d6d6ac #d6d6ac #96967a;
    outline: 1px solid #555;
  }
  .hint {
    padding-left: 4px;
  }
  .status {
    height: 29px;
    padding-left: 772px;
    background: #b5ffff;
    border-top: 4px solid #6f9c9c;
    border-bottom: 2px solid #5a8f8f;
    line-height: 23px;
    white-space: nowrap;
  }
  .edge {
    height: 12px;
    border-top: 3px solid #d8ffff;
    border-bottom: 3px solid #333;
    background: #040a08;
  }

  /* popview window */
  .popview {
    position: absolute;
    left: 229px;
    top: 79px;
    width: 984px;
    height: 683px;
    display: flex;
    flex-direction: column;
    padding: 0 6px 5px;
    border: 1px solid #c9c48a;
    border-top-color: #999;
    border-radius: 6px 6px 2px 2px;
    background: linear-gradient(#23272a 0, #0a0d0f 20px, #222 34px, #b8ab52 50px);
    box-shadow: 0 0 8px #000;
  }
  .popview header {
    display: flex;
    flex: none;
    gap: 6px;
    height: 27px;
    font: 12px/26px var(--ui);
  }
  .popview header span {
    padding: 0 6px 0 0;
    color: #b8b8b8;
    background: radial-gradient(#4a4a4a, transparent 75%);
  }
  .popview header .xicon {
    width: 15px;
    height: 14px;
    margin-top: 7px;
  }
  .popview .winbtns {
    height: 19px;
  }
  .popview .winbtns button {
    line-height: 15px;
  }
  .popbody {
    display: flex;
    flex: 1;
    flex-direction: column;
    min-height: 0;
    border: 1px solid #e4e0c0;
    background: var(--teal);
  }
  .popmain {
    display: flex;
    flex: 1;
    min-height: 0;
    background: #000;
    border: solid #3a6b5f;
    border-width: 3px 0 1px 3px;
  }
  .popcanvas {
    flex: 1;
    min-width: 0;
    height: 100%;
    overflow: hidden;
  }
  .poptools {
    display: flex;
    flex-direction: column;
    gap: 2px;
    padding-left: 2px;
    border-left: 3px solid #7fdcc4;
  }
  .poptools .tool {
    width: 34px;
    height: 33px;
    background: #9cdcd4;
    border-width: 4px;
    border-color: #96ead8 #3f9780 #3f9780 #96ead8;
  }
  .poptools .tool svg {
    width: 24px;
    height: 25px;
  }
  .popfoot {
    flex: none;
    padding: 5px 2px 1px;
  }
  .popfoot button {
    display: block;
    width: 100%;
    height: 26px;
    border: 2px solid var(--shade);
    border-top-color: #d4f5f3;
    border-left-color: #d4f5f3;
    background: var(--aqua);
    font: bold 15px/20px "Liberation Mono", monospace;
  }

  /* spreadsheet window */
  .excel {
    position: absolute;
    left: 951px;
    top: 344px;
    right: 0;
    bottom: 0;
    display: flex;
    flex-direction: column;
    padding-left: 7px;
    overflow: hidden;
    border-top: 1px solid #ccc;
    border-bottom: 2px solid #243444;
    border-radius: 6px 0 0 0;
    background: linear-gradient(#6b6e72 0, #3b4043 140px, #bbb 250px, #0b0d10 265px, #0b0d10 370px, #5b9fc4 400px, #8c8a55 430px, #8c8a55 610px, #5b8fa4 640px, #223 100%);
    color: #15428b;
    font: 12px/16px var(--ui);
  }
  .xtitle {
    display: flex;
    align-items: center;
    flex: none;
    height: 27px;
    margin-left: -7px;
    padding-left: 42px;
    background: linear-gradient(90deg, #66696d 0, #4b4e52 100px, #0b0d10 170px, #0b0d10 208px, #4b9096 216px, #4b9096 254px, #8c8a55 264px, #8f8c58 648px, #0a0e16 662px, #0a0e16 792px, #8fa0b8 806px, #6f8098 860px, #a0a8b4 100%);
  }
  .qat {
    display: flex;
    align-items: center;
    gap: 5px;
    height: 22px;
    padding: 0 10px 0 17px;
    border: 1px solid #85888c;
    border-left: 0;
    border-radius: 0 11px 11px 0;
    background: #56595e;
  }
  .qat .caret {
    border-top-color: #dde;
  }
  .more {
    width: 8px;
    height: 8px;
    margin-left: 8px;
  }
  .xtitle h1 {
    flex: 1;
    padding-right: 54px;
    text-align: center;
    color: #000;
    font: 13px/26px Roboto, "Noto Sans CJK SC", sans-serif;
    text-shadow: 0 0 6px #fff, 0 0 6px #ccc;
  }
  .xmin {
    display: grid;
    place-items: center;
    align-self: flex-start;
    width: 28px;
    height: 18px;
    border: 1px solid #dde;
    border-top: 0;
    border-radius: 0 0 0 5px;
  }
  .orb {
    position: absolute;
    left: 10px;
    top: 7px;
    display: grid;
    place-items: center;
    width: 36px;
    height: 36px;
    border-radius: 50%;
    border: 1px solid #888;
    background: radial-gradient(circle at 50% 30%, #fff, #d5d9df 60%, #a5adba);
  }
  .orb svg {
    width: 24px;
    height: 24px;
  }
  .ico {
    width: 16px;
    height: 16px;
    flex: none;
  }
  .caret {
    display: inline-block;
    flex: none;
    border: 3px solid transparent;
    border-top-color: #4a6fae;
    border-bottom: 0;
  }
  .xbody {
    display: flex;
    flex: 1;
    flex-direction: column;
    min-height: 0;
    background: #bfdbff;
  }
  .tabs {
    display: flex;
    flex: none;
    height: 27px;
    padding-left: 48px;
    border-top: 1px solid #223;
  }
  .tabs button {
    padding: 0 14px;
  }
  .tabs .on {
    height: 26px;
    padding: 0 11px;
    margin-right: 4px;
    border: 1px solid #8db2e3;
    border-bottom: 0;
    border-radius: 3px 3px 0 0;
    background: linear-gradient(#fdfeff, #e3edf9);
  }
  .tabs .xhelp {
    align-self: center;
    width: 16px;
    height: 16px;
    margin-left: auto;
    padding: 0;
    border-radius: 50%;
    border: 1px solid #fff;
    background: #2a62c8;
    color: #fff;
    line-height: 12px;
  }
  .ribbon {
    display: flex;
    flex: none;
    gap: 3px;
    height: 108px;
    padding: 2px 0 2px 3px;
    border-top: 1px solid #9cc0ee;
    border-bottom: 1px solid #7fb0d8;
    background: linear-gradient(#dce7f5, #c8d9ed 20px, #d6e5f5 80px, #dcf0fc);
  }
  .group {
    display: flex;
    flex: none;
    flex-direction: column;
    border: 1px solid #a9c1de;
    border-radius: 3px;
    box-shadow: 1px 1px #eef5fd;
    background: linear-gradient(#dee8f5, #d1dfef 14px, #c9d9ed 15px, #dbe8f7);
    white-space: nowrap;
  }
  .clip {
    width: 72px;
  }
  .font {
    width: 234px;
  }
  .align {
    width: 165px;
  }
  .number {
    width: 136px;
  }
  .styles {
    width: 165px;
  }
  .cells {
    width: 68px;
  }
  .edit {
    width: 150px;
  }
  .area {
    flex: 1;
    min-height: 0;
    padding: 10px 3px 0;
  }
  .row {
    display: flex;
    align-items: flex-start;
  }
  .cap {
    display: flex;
    flex: none;
    align-items: center;
    justify-content: center;
    position: relative;
    height: 20px;
    background: #c2d9f1;
    color: #3e6aaa;
  }
  .clip .cap,
  .font .cap,
  .align .cap,
  .number .cap {
    padding-right: 18px;
  }
  .launch {
    position: absolute;
    right: 4px;
    top: 4px;
    width: 9px;
    height: 9px;
  }
  .line {
    display: flex;
    gap: 4px;
    height: 25px;
    margin-bottom: 11px;
  }
  .line .set {
    height: 22px;
  }
  .set {
    display: flex;
    border: 1px solid #9ab6d9;
    border-radius: 2px;
    background: #d3e1f1;
  }
  .set button {
    display: grid;
    place-items: center;
    width: 22px;
    border-right: 1px solid #b8cde6;
    color: #222;
  }
  .set button:last-child {
    border-right: 0;
  }
  .set .thin {
    width: 11px;
    border-left: 0;
  }
  .set .hot {
    background: linear-gradient(#fbdbb0, #ffab3f 50%, #ffe27a);
  }
  .hotset {
    border-color: #b08a58;
  }
  .serif {
    font: 16px/18px "Liberation Serif", serif;
  }
  .fcolor {
    box-shadow: inset 0 -3px #d3e1f1, inset 0 -6px #e8000d;
    color: #2c4f9a !important;
    line-height: 12px;
  }
  .ga,
  .gb {
    font: bold 16px/18px "Liberation Serif", serif;
    grid-auto-flow: column;
  }
  .gb {
    font-size: 13px;
  }
  sup {
    font-size: 8px;
    line-height: 8px;
    align-self: start;
    color: #2b56b8;
  }
  .wen {
    font: 12px/11px "Noto Sans CJK SC", sans-serif;
    color: #2b46b0 !important;
  }
  .wen small {
    font-size: 8px;
    line-height: 8px;
    color: #222;
  }
  .combo {
    position: relative;
    height: 25px;
    border: 1px solid #abc1de;
    background: #eaf2fb;
  }
  .combo::after {
    content: "";
    position: absolute;
    right: 4px;
    top: 11px;
    border: 3px solid transparent;
    border-top-color: #4a6fae;
    border-bottom: 0;
  }
  .combo select {
    appearance: none;
    width: 100%;
    height: 100%;
    padding-left: 2px;
    color: #000;
  }
  .c1 {
    width: 131px;
    margin-right: -4px;
  }
  .c2 {
    width: 48px;
  }
  .c3 {
    width: 128px;
  }
  .align .area {
    gap: 2px;
  }
  .rule {
    padding-left: 3px;
    border-left: 1px solid #eef6ff;
    height: 56px;
  }
  .number .set button {
    width: 21px;
  }
  .number .set .thin {
    width: 12px;
  }
  .dec button {
    font: bold 9px/8px "Liberation Sans", sans-serif;
    align-content: center;
  }
  .clip .area {
    gap: 7px;
    padding: 4px 5px 0 8px;
  }
  .stack {
    display: flex;
    flex-direction: column;
    gap: 6px;
  }
  .big {
    display: flex;
    flex: none;
    flex-direction: column;
    align-items: center;
    color: #15428b;
    line-height: 17px;
  }
  .big svg {
    width: 32px;
    height: 30px;
    margin-bottom: 3px;
  }
  .big span {
    display: flex;
    align-items: center;
    gap: 3px;
    min-height: 17px;
  }
  .clip .big svg {
    width: 28px;
    height: 32px;
  }
  .clip .big .caret {
    margin-top: 7px;
  }
  .styles .area {
    gap: 5px;
    padding: 5px 5px 0;
  }
  .list {
    display: flex;
    flex-direction: column;
    gap: 6px;
    padding-top: 4px;
  }
  .list button {
    display: flex;
    align-items: center;
    gap: 4px;
    height: 16px;
  }
  .edit .area {
    gap: 8px;
    padding: 4px 5px 0;
  }
  .edit .list {
    padding-top: 0;
    gap: 7px;
  }
  .cells .list {
    padding-top: 4px;
  }
  .message {
    display: flex;
    align-items: center;
    flex: none;
    gap: 12px;
    height: 33px;
    margin: 5px 0 5px 2px;
    padding-left: 3px;
    border: 1px solid #9ebbe0;
    background: linear-gradient(#fff, #e4f1fe);
  }
  .message svg {
    width: 14px;
    height: 17px;
  }
  .message button {
    width: 70px;
    height: 21px;
    border: 1px solid #9ebbe0;
    background: #fff;
  }
  .formula {
    display: flex;
    flex: none;
    height: 20px;
    border: solid #5f8ac0;
    border-width: 1px 0;
    background: #fff;
    color: #000;
    font: 16px/18px var(--song);
  }
  .namebox {
    display: flex;
    align-items: center;
    width: 159px;
    padding-right: 7px;
  }
  .namebox span {
    flex: 1;
    padding-right: 4px;
    text-align: center;
  }
  .drop {
    border: 4px solid transparent;
    border-top-color: #000;
    border-bottom: 0;
  }
  .fx {
    display: flex;
    justify-content: space-between;
    align-items: center;
    width: 77px;
    padding: 0 6px 0 5px;
    border: 1px solid #7c9cc8;
    border-width: 0 1px;
    border-radius: 9px 0 0 9px;
    background: linear-gradient(#e6f0fc, #a9c5ea);
  }
  .ball {
    width: 8px;
    height: 8px;
    border-radius: 50%;
    background: #a3aebd;
  }
  .formula input {
    flex: 1;
    padding-left: 10px;
  }
  .sheet {
    flex: 1;
    min-height: 0;
    margin-top: 3px;
    overflow: hidden;
    border-top: 1px solid #5f8ac0;
    background: #fff;
  }
  table {
    width: 957px;
    table-layout: fixed;
    border-collapse: separate;
    border-spacing: 0;
    color: #000;
    font: 16px/19px var(--song);
  }
  th,
  td {
    padding: 0;
    overflow: hidden;
    border: solid #d0d7e5;
    border-width: 0 1px 1px 0;
  }
  thead th {
    height: 19px;
    border-color: #f29536;
    border-bottom-color: #d3a24f;
    background: linear-gradient(#f9d99f, #f1c05e);
    color: #27413e;
    font-weight: normal;
    line-height: 18px;
  }
  thead .corner {
    background: linear-gradient(135deg, #a9c4e9 60%, #e6eefa 60%);
    border-color: #9eb6ce;
  }
  tbody th {
    border-color: #9eb6ce;
    background: #e4ecf7;
    color: #27413e;
    font-weight: normal;
    line-height: 16px;
    vertical-align: bottom;
  }
  tr {
    height: 32px;
  }
  thead tr {
    height: 19px;
  }
  .tall {
    height: 34px;
  }
  .seven {
    height: 46px;
  }
  .nine {
    height: 31px;
  }
  .k {
    border-color: #000;
  }
  .blue {
    vertical-align: top;
    text-align: center;
    color: #0000c8;
    font-weight: bold;
    padding: 0 2px;
  }
  .heading {
    text-align: center;
    font-weight: bold;
    line-height: 19px;
  }
  .num {
    text-align: center;
  }
  .bold {
    font-weight: bold;
  }
  .note {
    padding-left: 3px;
    color: #c81414;
    font: 13px/19px "Liberation Mono", "Noto Sans CJK SC", monospace;
    white-space: nowrap;
  }
  .seven td {
    border-bottom: 3px double #000;
  }
  .seven td:nth-last-child(-n + 3),
  .current td:nth-last-child(-n + 3) {
    border-bottom: 3px solid #000;
  }
  .current td {
    background: #e8ebf5;
    border-bottom: 3px double #000;
  }
  .current .handle {
    border-left: 1px solid #000;
    border-bottom: 3px solid #000;
  }
  .current .red {
    background: #fff;
    color: #f01414;
  }
  .current th {
    background: #8db4de;
  }
  .link {
    padding: 2px 0 0 2px;
  }
  a {
    color: #7a1480;
  }

  /* overlays */
  .marker {
    position: absolute;
    left: 1040px;
    top: 992px;
    width: 338px;
    height: 37px;
    border: 4px solid #e61ae6;
    box-shadow: 2px 2px 4px #888, inset 2px 2px 4px #aaa;
  }
  .ime {
    display: flex;
    align-items: center;
    justify-content: space-between;
    background: #fff;
    border: 1px solid #bcc6d2;
    color: #445;
    font: 16px/20px "Noto Sans CJK SC", sans-serif;
  }
  .ime svg {
    width: 16px;
    height: 16px;
  }
  .small {
    position: absolute;
    left: 1363px;
    top: 972px;
    width: 163px;
    height: 24px;
    padding-right: 5px;
  }
  .moon {
    width: 14px;
    height: 14px;
    border-radius: 50%;
    background: #445;
  }
  .slogo {
    display: grid;
    place-items: center;
    width: 26px;
    height: 24px;
    border-radius: 3px;
    color: #fff;
    font: italic bold 24px/24px "Liberation Sans", sans-serif;
    transform: rotate(-8deg);
  }
  .green {
    background: #2fa52a;
  }
  .orange {
    background: #ee4f1c;
  }
  .ball360 {
    position: absolute;
    left: 1901px;
    top: 929px;
    width: 54px;
    height: 54px;
    padding-left: 2px;
    border: 3px solid #b9c8b9;
    border-radius: 50%;
    background: radial-gradient(circle at 50% 20%, #8be08b, #2f9e45);
    color: #fff;
    font: bold 13px/48px "Liberation Sans", sans-serif;
  }
  .notice {
    position: absolute;
    right: 0;
    bottom: 0;
    width: 214px;
    height: 44px;
    border: 1px solid #7890a8;
    background: #fff;
  }
  .ntitle {
    display: flex;
    align-items: center;
    gap: 5px;
    height: 18px;
    padding-left: 5px;
    background: linear-gradient(#9fb6c8, #d3dfe8);
    color: #222;
    font: bold 10px/18px "Noto Sans CJK SC", sans-serif;
  }
  .ntitle svg {
    width: 20px;
    height: 16px;
  }
  .blue.ime {
    height: 24px;
    padding: 0 2px 0 6px;
    color: #1b6fc4;
    font-weight: normal;
  }
</style>
